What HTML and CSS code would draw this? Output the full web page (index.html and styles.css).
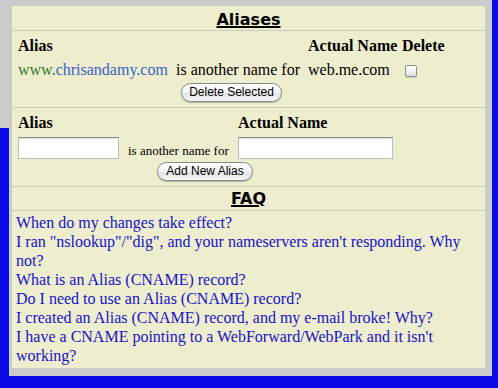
FILE: index.html
```html
<!DOCTYPE html>
<html>
<head>
<meta charset="utf-8">
<link rel="stylesheet" href="styles.css">
</head>
<body>
<div class="layout">
  <div class="side"><div class="side-fill"></div></div>
  <div class="frame">
    <div class="panel">
      <div class="title"><span>Aliases</span></div>
      <div class="sec">
        <div class="grid4">
          <div class="th">Alias</div>
          <div></div>
          <div class="th">Actual Name</div>
          <div class="th">Delete</div>
          <div><span class="www">www.</span><span class="dom">chrisandamy.com</span></div>
          <div>is another name for</div>
          <div>web.me.com</div>
          <div><input type="checkbox" class="cb"></div>
        </div>
        <div class="btnrow btnrow-del"><button class="aqua aqua-del">Delete Selected</button></div>
      </div>
      <div class="sec">
        <div class="grid3">
          <div class="th">Alias</div>
          <div></div>
          <div class="th">Actual Name</div>
          <div><input type="text" class="field field-alias"></div>
          <div class="small">is another name for</div>
          <div><input type="text" class="field field-actual"></div>
        </div>
        <div class="btnrow btnrow-add"><button class="aqua aqua-add">Add New Alias</button></div>
      </div>
      <div class="title faq-title"><span>FAQ</span></div>
      <ul class="faq">
        <li><a href="#">When do my changes take effect?</a></li>
        <li><a href="#">I ran "nslookup"/"dig", and your nameservers aren't responding. Why not?</a></li>
        <li><a href="#">What is an Alias (CNAME) record?</a></li>
        <li><a href="#">Do I need to use an Alias (CNAME) record?</a></li>
        <li><a href="#">I created an Alias (CNAME) record, and my e-mail broke! Why?</a></li>
        <li><a href="#">I have a CNAME pointing to a WebForward/WebPark and it isn't working?</a></li>
      </ul>
    </div>
  </div>
</div>
</body>
</html>
```
FILE: styles.css
```css
html, body {
  margin: 0;
  padding: 0;
}
body {
  width: 498px;
  height: 388px;
  overflow: hidden;
  background: #0a0ae6;
  font-family: "Liberation Serif", "Times New Roman", serif;
  font-size: 16px;
  color: #000;
}
.layout {
  display: flex;
  align-items: flex-start;
}
.side {
  width: 9px;
  flex: none;
}
.side-fill {
  height: 128px;
  background: #cbcbcb;
}
.frame {
  width: 473px;
  background: #cbcbcb;
  padding: 6px 7px 8px 3px;
  flex: none;
}
.panel {
  background: #eeedce;
}
.title {
  text-align: center;
  font-family: "DejaVu Sans", Verdana, sans-serif;
  font-weight: bold;
  font-size: 16px;
  line-height: 20px;
  padding-top: 4px;
}
.title span {
  text-decoration: underline;
  text-decoration-thickness: 2px;
  text-underline-offset: 1px;
}
.faq-title {
  border-top: 1px solid #c9c9c2;
  padding: 2px 0 1px;
}
.sec {
  border-top: 1px solid #c9c9c2;
  padding: 5px 0 5px 6px;
}
.grid4 {
  display: grid;
  grid-template-columns: 158px 132px 94px auto;
  row-gap: 5px;
  line-height: 19px;
}
.grid3 {
  display: grid;
  grid-template-columns: 110px 110px auto;
  row-gap: 5px;
  line-height: 19px;
  align-items: end;
}
.th {
  font-weight: bold;
}
.www {
  color: #2a7d2a;
}
.dom {
  color: #3863c6;
}
.cb {
  appearance: none;
  -webkit-appearance: none;
  width: 12px;
  height: 12px;
  margin: 5px 0 0 3px;
  border: 1px solid #8d8d8d;
  border-radius: 2px;
  background: linear-gradient(#ffffff, #f3f3f3 50%, #dedede);
  box-shadow: 0 1px 1px rgba(0,0,0,0.15);
  display: block;
}
.small {
  font-size: 13px;
  line-height: 15px;
  padding-bottom: 1px;
}
.field {
  box-sizing: border-box;
  height: 22px;
  margin: 0;
  display: block;
  background: #fff;
  border: 1px solid #bdbdbd;
  border-top-color: #8a8a8a;
  box-shadow: inset 0 1px 1px rgba(0,0,0,0.12);
  padding: 0 3px;
}
.field-alias {
  width: 101px;
}
.field-actual {
  width: 155px;
}
.btnrow {
  display: flex;
}
.btnrow-del {
  margin-top: 4px;
  padding-left: 163px;
}
.btnrow-add {
  margin-top: 3px;
  padding-left: 139px;
}
.aqua {
  box-sizing: border-box;
  height: 19px;
  margin: 0;
  padding: 0;
  border: 1px solid #8a8a8a;
  border-radius: 10px;
  background: linear-gradient(#ffffff, #f4f4f4 50%, #e2e2e2 51%, #f6f6f6);
  box-shadow: 0 1px 1px rgba(0,0,0,0.25);
  font-family: "Liberation Sans", Arial, sans-serif;
  font-size: 12px;
  line-height: 17px;
  color: #000;
  text-align: center;
}
.aqua-del {
  width: 101px;
}
.aqua-add {
  width: 96px;
}
.faq {
  list-style: none;
  margin: 0;
  border-top: 1px solid #c9c9c2;
  padding: 2px 3px 3px 4px;
  line-height: 19px;
}
.faq a {
  color: #1414c8;
  text-decoration: none;
}
```
